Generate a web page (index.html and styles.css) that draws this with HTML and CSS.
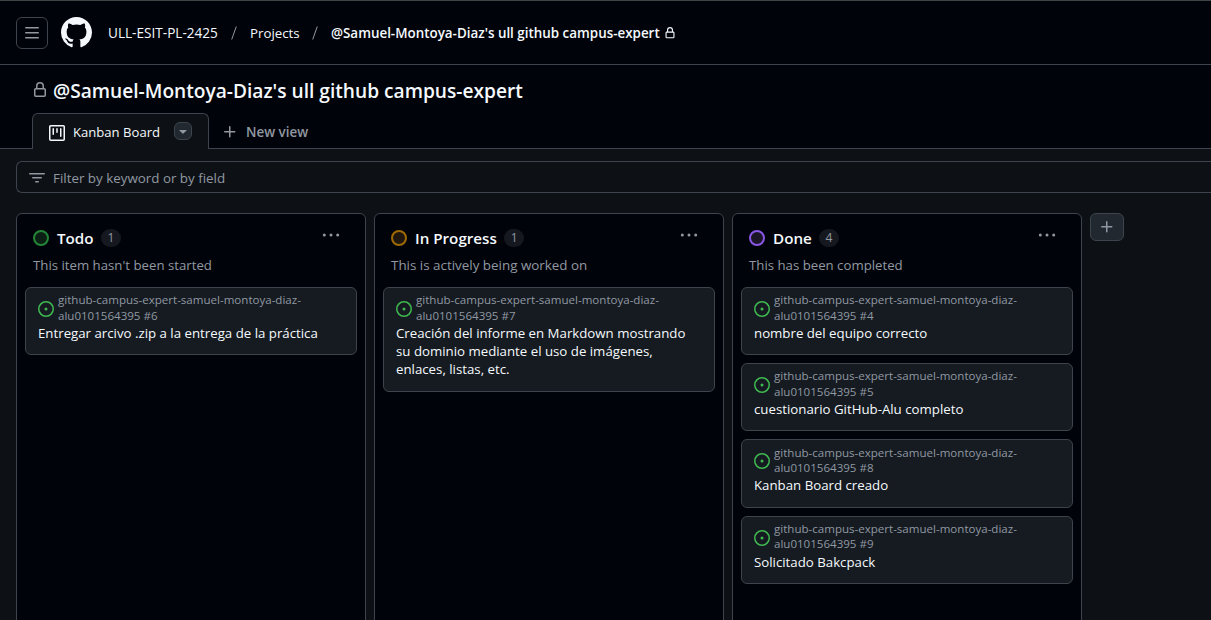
FILE: index.html
```html
<!DOCTYPE html>
<html lang="es">
<head>
<meta charset="utf-8">
<title>Kanban Board</title>
<link rel="stylesheet" href="styles.css">
</head>
<body>
<svg class="defs" aria-hidden="true">
  <symbol id="lock" viewBox="0 0 16 16"><path d="M4 4a4 4 0 0 1 8 0v2h.25c.966 0 1.75.784 1.75 1.75v5.5A1.75 1.75 0 0 1 12.25 15h-8.5A1.75 1.75 0 0 1 2 13.25v-5.5C2 6.784 2.784 6 3.75 6H4Zm8.25 3.5h-8.5a.25.25 0 0 0-.25.25v5.5c0 .138.112.25.25.25h8.5a.25.25 0 0 0 .25-.25v-5.5a.25.25 0 0 0-.25-.25ZM10.5 6V4a2.5 2.5 0 1 0-5 0v2Z"/></symbol>
  <symbol id="plus" viewBox="0 0 16 16"><path d="M7.75 2a.75.75 0 0 1 .75.75V7h4.25a.75.75 0 0 1 0 1.5H8.5v4.25a.75.75 0 0 1-1.5 0V8.5H2.75a.75.75 0 0 1 0-1.5H7V2.75A.75.75 0 0 1 7.75 2Z"/></symbol>
  <symbol id="issue" viewBox="0 0 16 16"><path d="M8 9.5a1.5 1.5 0 1 0 0-3 1.5 1.5 0 0 0 0 3Z"/><path d="M8 0a8 8 0 1 1 0 16A8 8 0 0 1 8 0ZM1.5 8a6.5 6.5 0 1 0 13 0 6.5 6.5 0 0 0-13 0Z"/></symbol>
  <symbol id="dots" viewBox="0 0 18 16"><circle cx="2.3" cy="8" r="1.5"/><circle cx="9" cy="8" r="1.5"/><circle cx="15.7" cy="8" r="1.5"/></symbol>
</svg>

<header class="topbar">
  <button class="menu-btn" aria-label="Menu"><svg class="icon" viewBox="0 0 16 16"><path d="M1 2.75A.75.75 0 0 1 1.75 2h12.5a.75.75 0 0 1 0 1.5H1.75A.75.75 0 0 1 1 2.75Zm0 5A.75.75 0 0 1 1.75 7h12.5a.75.75 0 0 1 0 1.5H1.75A.75.75 0 0 1 1 7.75ZM1.75 12h12.5a.75.75 0 0 1 0 1.5H1.75a.75.75 0 0 1 0-1.5Z"/></svg></button>
  <svg class="logo" viewBox="0 0 16 16"><path d="M8 0c4.42 0 8 3.58 8 8a8.013 8.013 0 0 1-5.45 7.59c-.4.08-.55-.17-.55-.38 0-.27.01-1.13.01-2.2 0-.75-.25-1.23-.54-1.48 1.78-.2 3.65-.88 3.65-3.95 0-.88-.31-1.59-.82-2.15.08-.2.36-1.02-.08-2.12 0 0-.67-.22-2.2.82-.64-.18-1.32-.27-2-.27-.68 0-1.36.09-2 .27-1.53-1.03-2.2-.82-2.2-.82-.44 1.1-.16 1.92-.08 2.12-.51.56-.82 1.28-.82 2.15 0 3.06 1.86 3.75 3.64 3.95-.23.2-.44.55-.51 1.07-.46.21-1.61.55-2.33-.66-.15-.24-.6-.83-1.23-.82-.67.01-.27.38.01.53.34.19.73.9.82 1.13.16.45.68 1.31 2.69.94 0 .67.01 1.3.01 1.49 0 .21-.15.45-.55.38A7.995 7.995 0 0 1 0 8c0-4.42 3.58-8 8-8Z"/></svg>
  <nav class="crumbs">
    <span class="crumb crumb-org">ULL-ESIT-PL-2425</span><svg class="slash" viewBox="0 0 6 14"><path d="M5.3.5.7 13.5"/></svg>
    <span class="crumb crumb-projects">Projects</span><svg class="slash" viewBox="0 0 6 14"><path d="M5.3.5.7 13.5"/></svg>
    <span class="crumb crumb-current">@Samuel-Montoya-Diaz's ull github campus-expert</span><svg class="crumb-lock"><use href="#lock"/></svg>
  </nav>
</header>

<section class="project-head">
  <div class="title-row"><svg class="icon"><use href="#lock"/></svg><h1>@Samuel-Montoya-Diaz's ull github campus-expert</h1></div>
  <div class="tabs">
    <div class="tab">
      <svg class="icon" viewBox="0 0 16 16"><path d="M1.75 0h12.5C15.216 0 16 .784 16 1.75v12.5A1.75 1.75 0 0 1 14.25 16H1.75A1.75 1.75 0 0 1 0 14.25V1.75C0 .784.784 0 1.75 0ZM1.5 1.75v12.5c0 .138.112.25.25.25h12.5a.25.25 0 0 0 .25-.25V1.75a.25.25 0 0 0-.25-.25H1.75a.25.25 0 0 0-.25.25ZM11.75 3a.75.75 0 0 1 .75.75v7.5a.75.75 0 0 1-1.5 0v-7.5a.75.75 0 0 1 .75-.75Zm-8.25.75a.75.75 0 0 1 1.5 0v5.5a.75.75 0 0 1-1.5 0ZM8 3a.75.75 0 0 1 .75.75v3.5a.75.75 0 0 1-1.5 0v-3.5A.75.75 0 0 1 8 3Z"/></svg>
      <span class="tab-name">Kanban Board</span>
      <button class="tab-menu" aria-label="View options"><svg class="icon" viewBox="0 0 16 16"><path d="m4.427 7.427 3.396 3.396a.25.25 0 0 0 .354 0l3.396-3.396A.25.25 0 0 0 11.396 7H4.604a.25.25 0 0 0-.177.427Z"/></svg></button>
    </div>
    <div class="new-view"><svg class="icon"><use href="#plus"/></svg><span>New view</span></div>
  </div>
</section>

<main>
  <div class="filter"><svg class="icon" viewBox="0 0 16 16"><path d="M.75 3h14.5a.75.75 0 0 1 0 1.5H.75a.75.75 0 0 1 0-1.5ZM3 7.75A.75.75 0 0 1 3.75 7h8.5a.75.75 0 0 1 0 1.5h-8.5A.75.75 0 0 1 3 7.75Zm3 4a.75.75 0 0 1 .75-.75h2.5a.75.75 0 0 1 0 1.5h-2.5a.75.75 0 0 1-.75-.75Z"/></svg><span>Filter by keyword or by field</span></div>

  <div class="board">
    <section class="column">
      <div class="column-head"><i class="status status-todo"></i><h2>Todo</h2><span class="count">1</span><svg class="dots"><use href="#dots"/></svg></div>
      <p class="desc">This item hasn't been started</p>
      <article class="card">
        <div class="meta"><svg class="icon"><use href="#issue"/></svg><span>github-campus-expert-samuel-montoya-diaz-<br>alu0101564395 #6</span></div>
        <p class="card-title">Entregar arcivo .zip a la entrega de la práctica</p>
      </article>
    </section>

    <section class="column">
      <div class="column-head"><i class="status status-progress"></i><h2>In Progress</h2><span class="count">1</span><svg class="dots"><use href="#dots"/></svg></div>
      <p class="desc desc-progress">This is actively being worked on</p>
      <article class="card card-tall">
        <div class="meta"><svg class="icon"><use href="#issue"/></svg><span>github-campus-expert-samuel-montoya-diaz-<br>alu0101564395 #7</span></div>
        <p class="card-title">Creación del informe en Markdown mostrando<br>su dominio mediante el uso de imágenes,<br>enlaces, listas, etc.</p>
      </article>
    </section>

    <section class="column">
      <div class="column-head"><i class="status status-done"></i><h2>Done</h2><span class="count">4</span><svg class="dots"><use href="#dots"/></svg></div>
      <p class="desc">This has been completed</p>
      <article class="card">
        <div class="meta"><svg class="icon"><use href="#issue"/></svg><span>github-campus-expert-samuel-montoya-diaz-<br>alu0101564395 #4</span></div>
        <p class="card-title">nombre del equipo correcto</p>
      </article>
      <article class="card">
        <div class="meta"><svg class="icon"><use href="#issue"/></svg><span>github-campus-expert-samuel-montoya-diaz-<br>alu0101564395 #5</span></div>
        <p class="card-title">cuestionario GitHub-Alu completo</p>
      </article>
      <article class="card">
        <div class="meta"><svg class="icon"><use href="#issue"/></svg><span>github-campus-expert-samuel-montoya-diaz-<br>alu0101564395 #8</span></div>
        <p class="card-title">Kanban Board creado</p>
      </article>
      <article class="card">
        <div class="meta"><svg class="icon"><use href="#issue"/></svg><span>github-campus-expert-samuel-montoya-diaz-<br>alu0101564395 #9</span></div>
        <p class="card-title">Solicitado Bakcpack</p>
      </article>
    </section>

    <button class="add-column" aria-label="Add column"><svg class="icon"><use href="#plus"/></svg></button>
  </div>
</main>
</body>
</html>
```
FILE: styles.css
```css
* { box-sizing: border-box; }

:root {
  --page: #0d1115;
  --inset: #01030a;
  --card: #151b21;
  --control: #212830;
  --border: #3d444d;
  --text: #f5f9fd;
  --muted: #9198a1;
}

body {
  margin: 0;
  height: 620px;
  overflow: hidden;
  display: flex;
  flex-direction: column;
  background: var(--page);
  color: var(--text);
  font: 13.3px/20px "Open Sans", "Noto Sans", sans-serif;
  white-space: nowrap;
}

h1, h2, p { margin: 0; }
button { padding: 0; border: 1px solid var(--border); display: flex; align-items: center; justify-content: center; color: var(--muted); }
svg { display: block; fill: currentColor; flex: none; }
.defs { position: absolute; width: 0; height: 0; }
.icon { width: 16px; height: 16px; }

/* Top bar */
.topbar {
  flex: none;
  height: 65px;
  padding: 0 16px;
  display: flex;
  align-items: center;
  background: var(--inset);
  border-top: 1px solid #3d4444;
  border-bottom: 1px solid var(--border);
}
.menu-btn { width: 32px; height: 32px; background: none; border-radius: 6px; }
.logo { width: 31px; height: 31px; margin-left: 13px; }
.crumbs { display: flex; align-items: center; margin-left: 16px; }
.crumb-org { width: 110px; font-size: 13.6px; }
.crumb-projects { width: 49px; }
.crumb-current { width: 330px; font-size: 13.4px; font-weight: 600; }
.slash { width: 6px; height: 14px; margin: 0 13px; fill: none; stroke: var(--muted); }
.crumb-lock { width: 12px; height: 12px; margin-left: 3px; }

/* Project title and view tabs */
.project-head { flex: none; height: 84px; background: var(--inset); box-shadow: inset 0 -1px var(--border); }
.title-row { height: 48px; padding: 4px 0 0 32px; display: flex; align-items: center; color: var(--muted); }
.title-row .icon { margin: -3px 5px 0 0; }
h1 { margin-top: -1px; color: var(--text); font-size: 19.15px; font-weight: 600; line-height: 30px; }
.tabs { display: flex; padding-left: 32px; }
.tab {
  width: 177px;
  height: 36px;
  padding: 2px 16px 0;
  display: flex;
  align-items: center;
  background: var(--page);
  border: 1px solid var(--border);
  border-bottom: 0;
  border-radius: 6px 6px 0 0;
}
.tab-name { margin: -2px 0 0 8px; width: 101px; font-size: 13.1px; }
.tab-menu { width: 18px; height: 18px; border-radius: 6px; background: var(--control); margin-top: -3px; }
.new-view { display: flex; align-items: center; gap: 8px; padding: 2px 0 0 13px; color: var(--muted); font-weight: 600; font-size: 13.4px; }

/* Filter */
main { flex: 1; min-height: 0; display: flex; flex-direction: column; gap: 20px; padding: 12px 0 0 16px; }
.filter {
  flex: none;
  height: 32px;
  padding: 2px 0 0 12px;
  display: flex;
  align-items: center;
  gap: 8px;
  border: 1px solid var(--border);
  border-right: 0;
  border-radius: 6px 0 0 6px;
  color: var(--muted);
}
.filter span { font-size: 13.37px; }

/* Board */
.board { flex: 1; min-height: 0; display: flex; align-items: flex-start; gap: 8px; }
.column {
  width: 350px;
  height: 430px;
  padding: 14px 8px 0;
  background: var(--inset);
  border: 1px solid var(--border);
  border-radius: 6px;
}
.column-head { display: flex; align-items: center; height: 20px; padding: 0 17px 0 8px; }
.status { width: 16px; height: 16px; border: 2px solid; border-radius: 50%; }
.status-todo { border-color: #238636; background: #0b1f14; }
.status-progress { border-color: #9e6a03; background: #1f170f; }
.status-done { border-color: #8957e5; background: #1b1528; }
h2 { margin-left: 8px; font-size: 15.2px; font-weight: 600; line-height: 20px; }
.count { margin-left: 7.5px; height: 18px; padding: 0 6.3px; border-radius: 9px; background: #15191f; color: var(--muted); font-size: 12px; line-height: 18px; }
.dots { width: 18px; height: 16px; margin: -6px 0 0 auto; color: var(--muted); }
.desc { padding: 7px 8px 0; height: 39px; color: var(--muted); font-size: 13.22px; }
.desc-progress { font-size: 13.4px; }
.card {
  height: 68.2px;
  margin-bottom: 8px;
  padding: 4px 12px 0;
  background: var(--card);
  border: 1px solid var(--border);
  border-radius: 6px;
}
.card-tall { height: 104.5px; }
.meta { display: flex; align-items: center; gap: 4px; height: 32px; color: var(--muted); font-size: 11.55px; line-height: 15.2px; }
.meta span { margin-top: -1px; }
.meta .icon { color: #3fb950; margin-top: 2px; }
.card-title { font-size: 13.25px; line-height: 18px; }
.add-column { width: 34px; height: 28px; border-radius: 6px; background: var(--control); }
```
